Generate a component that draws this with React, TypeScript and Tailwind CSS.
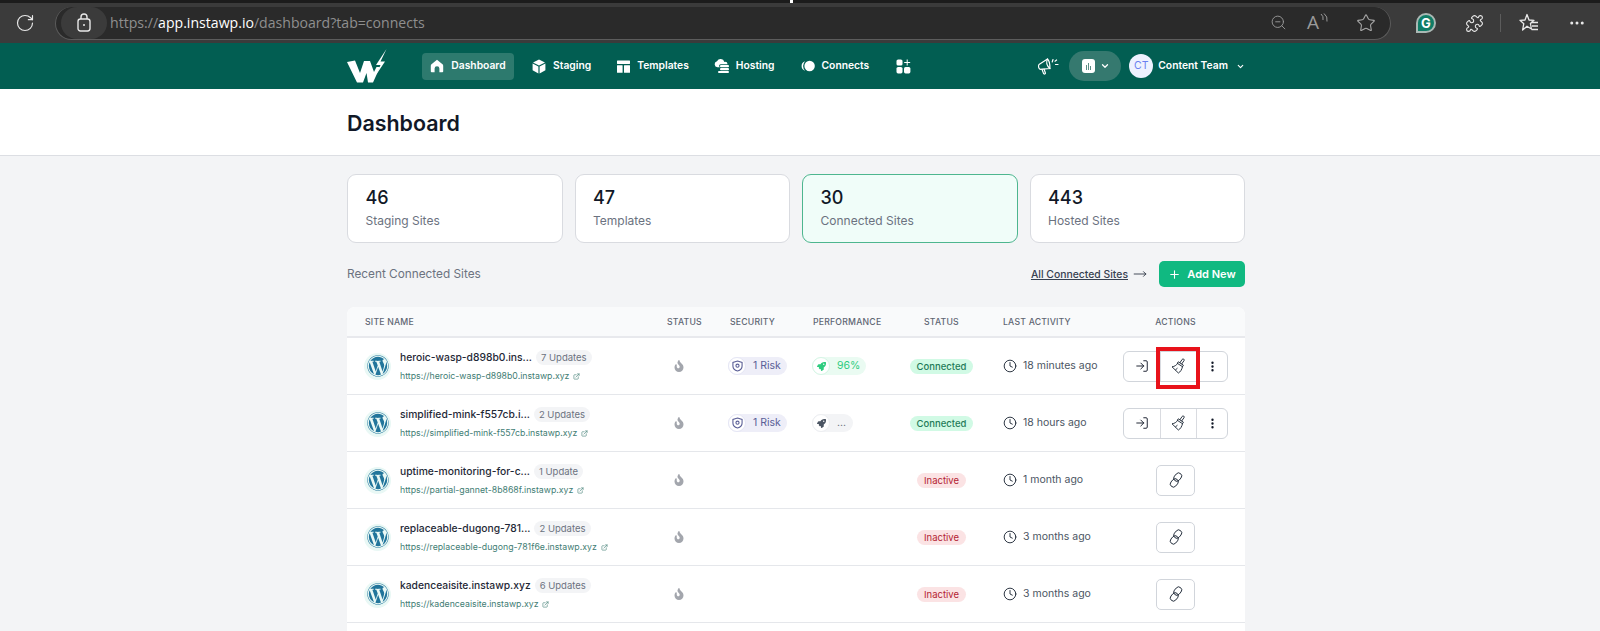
import React from "react";
import { RotateCw, ZoomOut, Star, Puzzle, ChevronDown, Plus, MoveRight, Clock, LogIn, EllipsisVertical, ExternalLink, Ellipsis } from "lucide-react";
import { FaWordpress, FaRocket, FaFire } from "react-icons/fa";

const Logo = () => (
  <svg width="40" height="34" viewBox="0 0 40 34" fill="#fff">
    <polygon points="0,13 8,11.5 13,24 17,12 23,12 27,23 29.5,18 33,18 26,33.5 21,33.5 19.5,24 16,33.5 10,33.5" />
    <polygon points="39.5,0 29,16 33.5,16 29,26 38,12.5 33.5,12.5" />
  </svg>
);
const HomeI = () => (
  <svg width="14" height="14" viewBox="0 0 14 14" fill="#fff"><path d="M7 .8 1.2 5.6C.9 6 .8 6.4.8 7v5.4c0 .5.4.8.8.8h3V9.6a2.4 2.4 0 0 1 4.8 0v3.6h3c.4 0 .8-.3.8-.8V7c0-.6-.1-1-.4-1.4z" /></svg>
);
const BoxI = () => (
  <svg width="14" height="15" viewBox="0 0 14 15" fill="#fff"><path d="M7 .5 13 3.4 7 6.4 1 3.4zM.6 4.6 6.4 7.5v7L.6 11.3zM13.4 4.6 7.6 7.5v7l5.8-3.2z" /></svg>
);
const TemplatesI = () => (
  <svg width="13" height="13" viewBox="0 0 13 13" fill="#fff"><rect x="0" y="0.5" width="13" height="3.4" rx=".4" /><rect x="0" y="5.2" width="5.6" height="7.6" rx=".4" /><rect x="7" y="5.2" width="6" height="7.6" rx=".4" /></svg>
);
const HostingI = () => (
  <svg width="15" height="14" viewBox="0 0 15 14" fill="#fff"><path d="M3.4 8.2A3 3 0 0 1 3 2.3a4 4 0 0 1 7.4.6 2.7 2.7 0 0 1 3.2 2.3H6.6a1.5 1.5 0 0 0 0 3z" /><rect x="6" y="6" width="9" height="2.2" rx="1" /><rect x="6" y="9" width="9" height="2.2" rx="1" /><rect x="4" y="12" width="11" height="2" rx="1" /></svg>
);
const ConnectsI = () => (
  <svg width="15" height="12" viewBox="0 0 15 12" fill="#fff"><path d="M5.2 1.2A5 5 0 0 0 5.2 10.8 6.5 6.5 0 0 1 5.2 1.2z" /><circle cx="9.6" cy="6" r="5.2" /></svg>
);
const AppsI = () => (
  <svg width="15" height="15" viewBox="0 0 15 15" fill="#fff"><rect x="0.5" y="0.5" width="6" height="6" rx="1.6" /><rect x="0.5" y="8" width="6" height="6.4" rx="1.6" /><rect x="8" y="8" width="6.4" height="6.4" rx="1.6" /><path d="M11.2.5v6M8.2 3.5h6" stroke="#fff" strokeWidth="1" fill="none" /></svg>
);
const MegaI = () => (
  <svg width="22" height="18" viewBox="0 0 22 18" fill="none" stroke="#fff" strokeWidth="1.2" strokeLinejoin="round" strokeLinecap="round">
    <path d="M2 7.5 10.5 2c1.6 1.5 2.6 4.5 2.4 9.5L3.5 12.3C1.6 12 1 9 2 7.5z" />
    <path d="M10.5 2c-1.2 2.5-1 6.5 2.4 9.5" />
    <path d="M5 12.2 6.6 16.6c.4.8 2 .4 1.8-.6L7 12" />
    <path d="M16 2.5 15.2 5M18.5 7.5h2.5M16.6 1" />
    <path d="M18 4.2l1.6-1.2" />
  </svg>
);
const LockI = () => (
  <svg width="14" height="19" viewBox="0 0 14 19" fill="none" stroke="#e8e8e8" strokeWidth="1.4"><rect x="1" y="6" width="12" height="12" rx="2.4" /><path d="M4 6V4a3 3 0 0 1 6 0v2" /><circle cx="7" cy="12" r="1" fill="#e8e8e8" stroke="none" /></svg>
);
const FavI = () => (
  <svg width="20" height="20" viewBox="0 0 20 20" fill="none" stroke="#e8e8e8" strokeWidth="1.3" strokeLinejoin="round"><path d="M8 1.5 10 7l5 .3-3.6 3.2 1 5.5L8 13.2 3.6 17l1.2-6.3L1 7.3 6 7z" /><path d="M12 9.5h7M13 13h6M12.5 16.5h6.5" /></svg>
);
const ReadI = () => (
  <div className="relative flex h-5 w-[18px] items-center">
    <span className="font-['Open_Sans',sans-serif] text-[19px] leading-none text-[#9a9a9a]">A</span>
    <svg className="absolute -right-[3px] top-0" width="8" height="11" viewBox="0 0 8 11" fill="none" stroke="#9a9a9a" strokeWidth="1"><path d="M1 1a6 6 0 0 1 2 6M4 .5a8 8 0 0 1 3 8" /></svg>
  </div>
);
const ShieldI = () => (
  <svg width="11" height="12" viewBox="0 0 12 13" fill="none" stroke="#5b5f97" strokeWidth="1.2"><path d="M6 1 11 2.6v4C11 9.5 8.8 11.3 6 12 3.2 11.3 1 9.5 1 6.6v-4z" /><circle cx="6" cy="6.2" r="1.7" /></svg>
);
const BrushI = () => (
  <svg width="15" height="16" viewBox="0 0 15 16" fill="none" stroke="#1f2937" strokeWidth="0.95" strokeLinejoin="round" strokeLinecap="round">
    <path d="M9 4.6 11.2 1.4a1.1 1.1 0 0 1 1.8 1.3L10.8 5.8" />
    <path d="M7.6 4 12.4 7.2 11.5 8.7 6.6 5.5z" />
    <path d="M6.6 5.5C5.4 7.4 3.4 8.5 1 8.8l6.4 6.2c2-1.1 3.5-3.4 4.1-6.3" />
    <path d="M4.6 11.8 6.2 10.4" />
  </svg>
);
const LinkI = () => (
  <svg width="16" height="16" viewBox="0 0 16 16" fill="none" stroke="#1f2937" strokeWidth="0.9">
    <rect x="6.6" y="0.6" width="6.2" height="9" rx="3.1" transform="rotate(40 9.7 5.1)" />
    <rect x="3.2" y="6.4" width="6.2" height="9" rx="3.1" transform="rotate(40 6.3 10.9)" />
  </svg>
);

const Nav = ({ icon, label, className }: { icon: React.ReactNode; label: string; className?: string }) => (
  <div className={"flex items-center gap-[7px] text-[10.3px] font-semibold text-white " + (className ?? "")}>
    {icon}
    <span>{label}</span>
  </div>
);

const Card = ({ n, label, active }: { n: string; label: string; active?: boolean }) => (
  <div className={"flex h-[69px] flex-col rounded-[9px] border pl-[17.5px] pt-[12px] " + (active ? "border-[#4db68f] bg-[#f0fdf9]" : "border-[#d9dbe0] bg-white")}>
    <div className="text-[18px] font-medium leading-[22px] text-[#111827]">{n}</div>
    <div className="mt-[4px] text-[12px] leading-[16px] text-[#6b7280]">{label}</div>
  </div>
);

const COLS = "grid grid-cols-[320px_63px_82px_85px_89px_129px_121px]";

type Row = { name: string; updates: string; url: string; state: "on" | "off"; time: string; risk?: boolean; perf?: string };
const rows: Row[] = [
  { name: "heroic-wasp-d898b0.ins...", updates: "7 Updates", url: "https://heroic-wasp-d898b0.instawp.xyz", state: "on", time: "18 minutes ago", risk: true, perf: "96%" },
  { name: "simplified-mink-f557cb.i...", updates: "2 Updates", url: "https://simplified-mink-f557cb.instawp.xyz", state: "on", time: "18 hours ago", risk: true, perf: "..." },
  { name: "uptime-monitoring-for-c...", updates: "1 Update", url: "https://partial-gannet-8b868f.instawp.xyz", state: "off", time: "1 month ago" },
  { name: "replaceable-dugong-781...", updates: "2 Updates", url: "https://replaceable-dugong-781f6e.instawp.xyz", state: "off", time: "3 months ago" },
  { name: "kadenceaisite.instawp.xyz", updates: "6 Updates", url: "https://kadenceaisite.instawp.xyz", state: "off", time: "3 months ago" },
];

const TableRow = ({ r, first }: { r: Row; first: boolean }) => (
  <div className={COLS + " h-[57px] items-center border-b border-[#e5e7eb] bg-white"}>
    <div className="flex items-center pl-[17px]">
      <div className="flex h-[27px] w-[27px] items-center justify-center rounded-full bg-[#e9f8f5]">
        <FaWordpress className="text-[22px] text-[#21759b]" />
      </div>
      <div className="ml-[9px] flex flex-col">
        <div className="flex items-center gap-[4px]">
          <span className="text-[10.3px] font-medium leading-[16px] text-[#1f2937]">{r.name}</span>
          <span className="rounded-full bg-[#f3f4f6] px-[5px] text-[9.5px] leading-[15px] text-[#6b7280]">{r.updates}</span>
        </div>
        <div className="mt-[5px] flex items-center gap-[4px]">
          <span className="text-[8.75px] leading-[13px] text-[#3f7d74]">{r.url}</span>
          <ExternalLink size={7} strokeWidth={2} className="text-[#3f7d74]" />
        </div>
      </div>
    </div>
    <div className="pl-[6px]"><FaFire className="text-[12px] text-[#a3a6ad]" /></div>
    <div>
      {r.risk && (
        <div className="-ml-[2px] flex h-[18px] w-[59px] items-center rounded-full bg-[#eeeef8]">
          <span className="flex h-[18px] w-[18px] items-center justify-center rounded-full border border-[#e5e6f5] bg-white"><ShieldI /></span>
          <span className="ml-[7px] text-[10.5px] text-[#5b5f97]">1 Risk</span>
        </div>
      )}
    </div>
    <div>
      {r.perf && (
        <div className={"flex h-[18px] items-center rounded-full " + (r.perf === "96%" ? "w-[54px] bg-[#eafbf2]" : "w-[41px] bg-[#f3f4f6]")}>
          <span className={"flex h-[18px] w-[18px] items-center justify-center rounded-full border bg-white " + (r.perf === "96%" ? "border-[#d5f5e5]" : "border-[#eceef1]")}>
            <FaRocket className={"text-[9px] " + (r.perf === "96%" ? "text-[#2ecc7f]" : "text-[#4b5563]")} />
          </span>
          <span className={"ml-[7px] text-[10.5px] " + (r.perf === "96%" ? "text-[#2ecc7f]" : "text-[#6b7280]")}>{r.perf}</span>
        </div>
      )}
    </div>
    <div className="flex justify-center">
      {r.state === "on" ? (
        <span className="rounded-full bg-[#d1fae5] px-[7px] text-[9.5px] font-medium leading-[15px] text-[#1f7a58]">Connected</span>
      ) : (
        <span className="rounded-full bg-[#fbe3e4] px-[7px] text-[9.5px] leading-[15px] text-[#b42333]">Inactive</span>
      )}
    </div>
    <div className="flex items-center pl-[17px]">
      <Clock size={14} strokeWidth={1.6} className="text-[#1f2937]" />
      <span className="ml-[6px] text-[10.5px] text-[#4b5563]">{r.time}</span>
    </div>
    <div className="flex justify-center">
      {r.state === "on" ? (
        <div className="flex h-[31px] w-[105px] rounded-[6px] border border-[#d1d5db] bg-white">
          <div className="flex w-[36px] items-center justify-center"><LogIn size={14} strokeWidth={1.6} className="text-[#111827]" /></div>
          <div className="relative flex w-[37px] items-center justify-center border-x border-[#d9dbe0]">
            <BrushI />
            {first && <div className="absolute -bottom-[8px] -left-[5px] -right-[4px] -top-[5px] border-[4px] border-[#e8121a]" />}
          </div>
          <div className="flex flex-1 items-center justify-center"><EllipsisVertical size={13} strokeWidth={2.4} className="text-[#111827]" /></div>
        </div>
      ) : (
        <div className="flex h-[31px] w-[39px] items-center justify-center rounded-[5px] border border-[#d1d5db] bg-white">
          <LinkI />
        </div>
      )}
    </div>
  </div>
);

export default function App() {
  return (
    <div className="h-[631px] w-full overflow-hidden bg-[#f3f4f6] font-['Inter',sans-serif]">
      <div className="relative h-[3px] bg-[#1c1c1c]"><span className="absolute left-[790px] top-0 h-[3px] w-[3px] bg-white" /></div>
      <div className="flex h-[40px] items-center bg-[#3b3b3b]">
        <RotateCw size={20} strokeWidth={1.4} className="ml-[15px] text-[#e8e8e8]" />
        <div className="ml-[20px] flex h-[33px] w-[1336px] items-center rounded-full border border-t-0 border-[#5c5c5c] bg-[#2a2a2a] pl-[5px] font-['Open_Sans',sans-serif]">
          <div className="flex h-[32px] w-[46px] items-center justify-center rounded-full bg-[#3b3b3b]"><LockI /></div>
          <div className="ml-[3px] text-[14.1px] text-[#8f8f8f]">https://<span className="text-white">app.instawp.io</span>/dashboard?tab=connects</div>
          <div className="ml-auto mr-[14px] flex items-center">
            <ZoomOut size={17} strokeWidth={1.3} className="text-[#9a9a9a]" />
            <div className="ml-[20px]"><ReadI /></div>
            <Star size={20} strokeWidth={1.3} className="ml-[31px] text-[#a8a8a8]" />
          </div>
        </div>
        <div className="ml-[25px] flex h-[20px] w-[20px] items-center justify-center rounded-full rounded-bl-[3px] border-2 border-[#a9b8b4] bg-[#0f7c66] text-[13px] font-bold leading-none text-white">G</div>
        <Puzzle size={19} strokeWidth={1.4} className="ml-[29px] text-[#e8e8e8]" />
        <div className="ml-[16px] h-[18px] w-px bg-[#5c5c5c]" />
        <div className="ml-[18px]"><FavI /></div>
        <Ellipsis size={18} strokeWidth={2} className="ml-[29px] text-[#e8e8e8]" />
      </div>

      <div className="flex h-[46px] items-center bg-[#025e52] pl-[347px]">
        <Logo />
        <Nav className="ml-[35px] h-[27px] w-[92px] justify-center rounded-[4px] bg-[#2d7a6e]" icon={<HomeI />} label="Dashboard" />
        <Nav className="ml-[18px]" icon={<BoxI />} label="Staging" />
        <Nav className="ml-[26px]" icon={<TemplatesI />} label="Templates" />
        <Nav className="ml-[25px]" icon={<HostingI />} label="Hosting" />
        <Nav className="ml-[25px]" icon={<ConnectsI />} label="Connects" />
        <div className="ml-[27px]"><AppsI /></div>
        <div className="ml-[126px]"><MegaI /></div>
        <div className="ml-[10px] flex h-[30px] w-[52px] items-center rounded-full bg-[#35796f] pl-[13px]">
          <div className="flex h-[14px] w-[13px] items-end justify-center gap-[1px] rounded-[3px] bg-white pb-[3px]">
            <span className="h-[5px] w-px bg-[#5b8d85]" /><span className="h-[7px] w-px bg-[#5b8d85]" /><span className="h-[4px] w-px bg-[#5b8d85]" />
          </div>
          <ChevronDown size={10} strokeWidth={3} className="ml-[5px] text-white" />
        </div>
        <div className="ml-[8px] flex h-[24px] w-[24px] items-center justify-center rounded-full bg-[#eef2ff] text-[10.5px] text-[#6a7ff0]">CT</div>
        <span className="ml-[5px] text-[10.3px] font-semibold text-white">Content Team</span>
        <ChevronDown size={9} strokeWidth={3} className="ml-[8px] text-white" />
      </div>

      <div className="flex h-[67px] items-center border-b border-[#dcdee3] bg-white pl-[347px] pt-[2px]">
        <h1 className="text-[21.4px] font-semibold text-[#111827]">Dashboard</h1>
      </div>

      <div className="ml-[347px] w-[898px]">
        <div className="mt-[18px] grid grid-cols-4 gap-x-[12px]">
          <Card n="46" label="Staging Sites" />
          <Card n="47" label="Templates" />
          <Card n="30" label="Connected Sites" active />
          <Card n="443" label="Hosted Sites" />
        </div>

        <div className="mt-[18px] flex h-[26px] items-center">
          <span className="mt-[2px] text-[11.8px] text-[#6b7280]">Recent Connected Sites</span>
          <span className="ml-auto mt-[2px] text-[10.4px] font-medium text-[#374151] underline">All Connected Sites</span>
          <MoveRight size={14} strokeWidth={1.4} className="ml-[5px] text-[#1f2937]" />
          <div className="ml-[12px] flex h-[26px] w-[86px] items-center justify-center gap-[6px] rounded-[5px] bg-[#10b981] text-[11px] font-semibold text-white">
            <Plus size={13} strokeWidth={2} />
            Add New
          </div>
        </div>

        <div className="mt-[20px] overflow-hidden rounded-t-[8px] bg-white">
          <div className={COLS + " h-[31px] items-center border-b-2 border-[#e8e9ed] bg-[#f9fafb] pt-[2px] text-[8.7px] font-medium uppercase tracking-[0.2px] text-[#5f6673]"}>
            <div className="pl-[18px]">Site Name</div>
            <div>Status</div>
            <div>Security</div>
            <div className="pl-[1px]">Performance</div>
            <div className="text-center">Status</div>
            <div className="pl-[17px]">Last Activity</div>
            <div className="text-center">Actions</div>
          </div>
          {rows.map((r, i) => (
            <TableRow key={r.url} r={r} first={i === 0} />
          ))}
          <div className="h-[20px] bg-white" />
        </div>
      </div>
    </div>
  );
}
